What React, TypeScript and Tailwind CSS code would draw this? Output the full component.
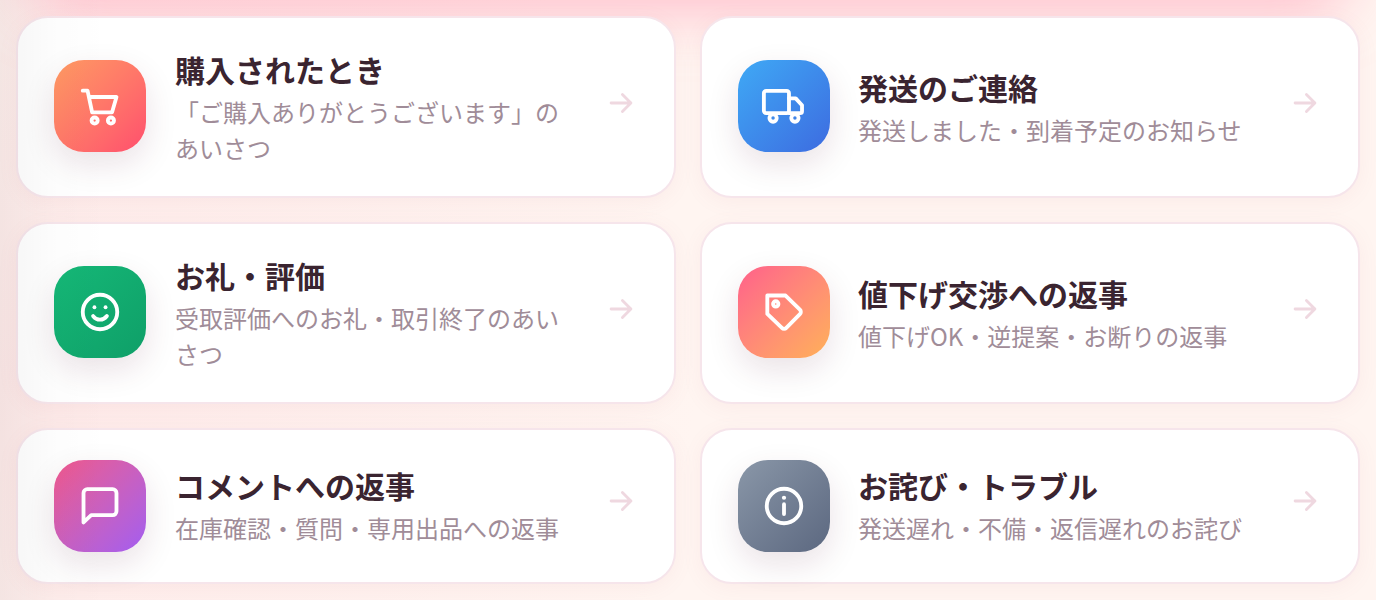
import { ReactNode } from 'react';

type Category = {
  title: string;
  description: string;
  tile: string;
  icon: ReactNode;
};

const categories: Category[] = [
  {
    title: '購入されたとき',
    description: '「ご購入ありがとうございます」のあいさつ',
    tile: 'bg-linear-135 from-[#ff9a62] to-[#ff4d6d]',
    icon: (
      <>
        <path d="M3 4h2.5l2.4 11.3h10.4l2.3-8H6.2" />
        <circle cx="9.2" cy="19.6" r="1.6" />
        <circle cx="17.7" cy="19.6" r="1.6" />
      </>
    ),
  },
  {
    title: '発送のご連絡',
    description: '発送しました・到着予定のお知らせ',
    tile: 'bg-linear-135 from-[#3fa9f5] to-[#3d6be0]',
    icon: (
      <>
        <rect x="1.5" y="4.1" width="13.1" height="11.6" rx="1.2" />
        <path d="M14.6 8h3.5l3.3 3.6v3.1a1 1 0 0 1-1 1h-5.8" />
        <circle cx="6.3" cy="18.3" r="1.9" />
        <circle cx="17.7" cy="18.3" r="1.9" />
      </>
    ),
  },
  {
    title: 'お礼・評価',
    description: '受取評価へのお礼・取引終了のあいさつ',
    tile: 'bg-linear-135 from-[#15b877] to-[#0f9f68]',
    icon: (
      <>
        <circle cx="12" cy="12" r="9" />
        <path d="M8.4 14.1c.9 1.2 2.2 1.9 3.6 1.9s2.7-.7 3.6-1.9" />
        <circle cx="9.1" cy="9.5" r="1" fill="currentColor" stroke="none" />
        <circle cx="14.9" cy="9.5" r="1" fill="currentColor" stroke="none" />
      </>
    ),
  },
  {
    title: '値下げ交渉への返事',
    description: '値下げOK・逆提案・お断りの返事',
    tile: 'bg-linear-135 from-[#ff5f8a] to-[#ffb057]',
    icon: (
      <>
        <path d="M3.3 3.4h9.5l7.5 7.4a1.6 1.6 0 0 1 0 2.3l-7.1 7.2a1.6 1.6 0 0 1-2.3 0L3.3 13z" />
        <circle cx="7.7" cy="7.8" r="1.4" />
      </>
    ),
  },
  {
    title: 'コメントへの返事',
    description: '在庫確認・質問・専用出品への返事',
    tile: 'bg-linear-135 from-[#f0568a] to-[#a35cf0]',
    icon: <path d="M20.6 5.2v9.6a2 2 0 0 1-2 2H7.4l-4 3.8V5.2a2 2 0 0 1 2-2h13.2a2 2 0 0 1 2 2z" />,
  },
  {
    title: 'お詫び・トラブル',
    description: '発送遅れ・不備・返信遅れのお詫び',
    tile: 'bg-linear-135 from-[#8a97a8] to-[#5c6880]',
    icon: (
      <>
        <circle cx="12" cy="12" r="9" />
        <path d="M12 11.1v5.1" />
        <circle cx="12" cy="7.7" r="1.1" fill="currentColor" stroke="none" />
      </>
    ),
  },
];

function CategoryCard({ title, description, tile, icon }: Category) {
  return (
    <a
      href="#"
      className="group flex items-center gap-7 odd:gap-[29px] rounded-[32px] border-2 border-[#f6e5eb] bg-white px-9 py-[30px] shadow-[0_4px_20px_rgba(200,110,130,0.07)]"
    >
      <span
        className={`flex size-[92px] shrink-0 -translate-y-px items-center justify-center rounded-[30px] text-white shadow-[0_12px_32px_rgba(80,20,50,0.12)] group-nth-[n+5]:translate-y-0 ${tile}`}
      >
        <svg
          viewBox="0 0 24 24"
          className="size-[46px]"
          fill="none"
          stroke="currentColor"
          strokeWidth="2"
          strokeLinecap="round"
          strokeLinejoin="round"
        >
          {icon}
        </svg>
      </span>
      <span className="min-w-0 flex-1 group-nth-[n+5]:-translate-y-px">
        <span className="block text-[30px] leading-[42px] font-bold text-[#3a2430]">{title}</span>
        <span className="mt-1 block text-2xl leading-9 text-[#a08c98]">{description}</span>
      </span>
      <svg
        viewBox="0 0 24 24"
        className="mb-2 size-[34px] shrink-0 text-[#efd8e0] group-nth-[n+5]:-translate-y-px"
        fill="none"
        stroke="currentColor"
        strokeWidth="2"
        strokeLinecap="round"
        strokeLinejoin="round"
      >
        <path d="M5 12h14M13 6l6 6-6 6" />
      </svg>
    </a>
  );
}

export default function App() {
  return (
    <div className="relative h-[600px] overflow-hidden bg-[#fff5f1] bg-[radial-gradient(ellipse_700px_620px_at_0_380px,rgba(250,195,205,0.22),transparent)] font-['Noto_Sans_CJK_JP',sans-serif]">
      <div className="absolute inset-x-7 -top-40 h-40 rounded-[40px] shadow-[0_10px_60px_rgba(255,150,175,0.6)]" />
      <main className="relative grid grid-cols-2 gap-6 p-4">
        {categories.map((category) => (
          <CategoryCard key={category.title} {...category} />
        ))}
      </main>
      <div className="pointer-events-none absolute inset-y-0 left-0 w-[110px] bg-linear-to-r from-black/4 via-black/1 via-50% to-transparent" />
    </div>
  );
}
